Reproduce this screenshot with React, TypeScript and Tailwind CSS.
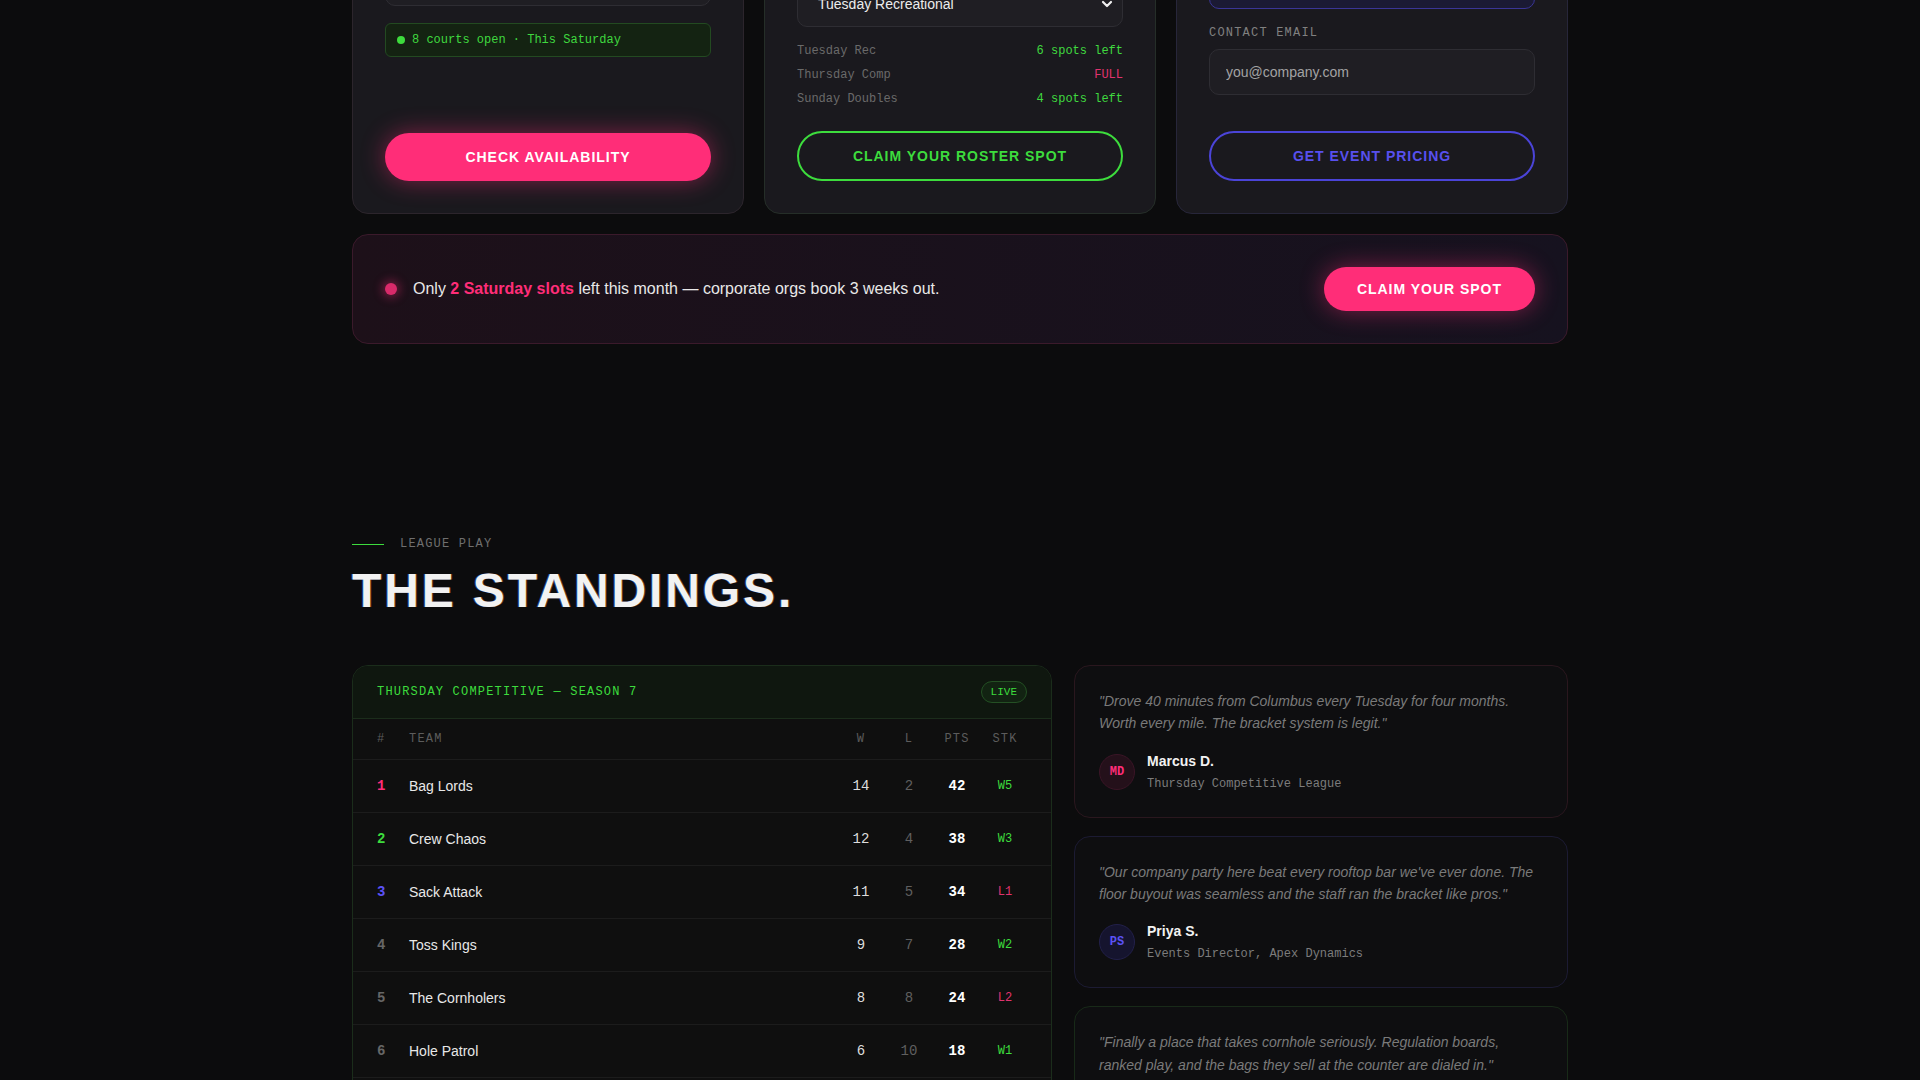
import React from "react";

const rows = [
  { rank: "1", rankColor: "text-[#ff2d78]", team: "Bag Lords", w: "14", l: "2", pts: "42", stk: "W5", win: true },
  { rank: "2", rankColor: "text-[#3ddc3d]", team: "Crew Chaos", w: "12", l: "4", pts: "38", stk: "W3", win: true },
  { rank: "3", rankColor: "text-[#5b52f5]", team: "Sack Attack", w: "11", l: "5", pts: "34", stk: "L1", win: false },
  { rank: "4", rankColor: "text-[#666666]", team: "Toss Kings", w: "9", l: "7", pts: "28", stk: "W2", win: true },
  { rank: "5", rankColor: "text-[#666666]", team: "The Cornholers", w: "8", l: "8", pts: "24", stk: "L2", win: false },
  { rank: "6", rankColor: "text-[#666666]", team: "Hole Patrol", w: "6", l: "10", pts: "18", stk: "W1", win: true },
  { rank: "7", rankColor: "text-[#666666]", team: "Board Certified", w: "5", l: "11", pts: "15", stk: "L3", win: false },
  { rank: "8", rankColor: "text-[#666666]", team: "Corn Stars", w: "3", l: "13", pts: "9", stk: "L4", win: false },
];

function LeftCard() {
  return (
    <div className="flex flex-col rounded-2xl border border-[#2c252c] bg-[#1a191e] p-8">
      <h3 className="text-xl font-bold leading-7 text-white">Book a Court</h3>
      <div className="mt-[25px] font-['Liberation_Mono',monospace] text-xs leading-4 tracking-[0.1em] text-[#808080]">
        DATE
      </div>
      <div className="mt-2 h-[46px] rounded-[10px] border border-[#2e2d33] bg-[#1f1e23]" />
      <div className="mt-[17px] flex h-[34px] items-center gap-[7px] rounded-md border border-[#234a21] bg-[#142312] px-[11px] font-['Liberation_Mono',monospace] text-xs text-[#3fd83f]">
        <span className="h-2 w-2 rounded-full bg-[#3ddc3d]" />
        <span>8 courts open · This Saturday</span>
      </div>
      <button className="mt-auto h-12 w-full rounded-full bg-[#ff2d78] text-sm font-bold uppercase tracking-[0.07em] text-white shadow-[0_0_24px_rgba(255,45,120,0.45)]">
        Check Availability
      </button>
    </div>
  );
}

function MiddleCard() {
  return (
    <div className="flex flex-col rounded-2xl border border-[#252e28] bg-[#1a191e] p-8">
      <h3 className="text-xl font-bold leading-7 text-white">Join a League</h3>
      <div className="mt-[46px] font-['Liberation_Mono',monospace] text-xs leading-4 tracking-[0.1em] text-[#808080]">
        LEAGUE NIGHT
      </div>
      <div className="mt-2 flex h-[46px] items-center rounded-[10px] border border-[#2e2d33] bg-[#1f1e23] pl-5 pr-[9px] text-sm text-[#ececec]">
        <span>Tuesday Recreational</span>
        <svg className="ml-auto" width="12" height="12" viewBox="0 0 12 12" fill="none">
          <path d="M2 4l4 4 4-4" stroke="#f0f0f0" strokeWidth="2.2" strokeLinecap="round" strokeLinejoin="round" />
        </svg>
      </div>
      <div className="mb-[20px] mt-[12px] font-['Liberation_Mono',monospace] text-xs">
        <div className="flex h-6 items-center justify-between">
          <span className="text-[#6a6a6a]">Tuesday Rec</span>
          <span className="text-[#3fd83f]">6 spots left</span>
        </div>
        <div className="flex h-6 items-center justify-between">
          <span className="text-[#6a6a6a]">Thursday Comp</span>
          <span className="text-[#e0336e]">FULL</span>
        </div>
        <div className="flex h-6 items-center justify-between">
          <span className="text-[#6a6a6a]">Sunday Doubles</span>
          <span className="text-[#3fd83f]">4 spots left</span>
        </div>
      </div>
      <button className="mt-auto h-[50px] w-full rounded-full border-2 border-[#3ddc3d] text-sm font-bold uppercase tracking-[0.07em] text-[#3ddc3d]">
        Claim Your Roster Spot
      </button>
    </div>
  );
}

function RightCard() {
  return (
    <div className="flex flex-col rounded-2xl border border-[#27263a] bg-[#1a191e] p-8">
      <h3 className="text-xl font-bold leading-7 text-white">Corporate Events</h3>
      <div className="mt-[28px] font-['Liberation_Mono',monospace] text-xs leading-4 tracking-[0.1em] text-[#808080]">
        COMPANY
      </div>
      <div className="mt-2 h-[46px] rounded-[10px] border border-[#3a3596] bg-[#1b1a34]" />
      <div className="mt-[16px] font-['Liberation_Mono',monospace] text-xs leading-4 tracking-[0.1em] text-[#808080]">
        CONTACT EMAIL
      </div>
      <input
        className="mt-[8px] h-[46px] w-full rounded-[10px] border border-[#2e2d33] bg-[#1f1e23] px-4 font-['Liberation_Sans',Arial,sans-serif] text-sm text-white outline-none placeholder:text-[#a3a3a3]"
        placeholder="you@company.com"
      />
      <button className="mt-auto h-[50px] w-full rounded-full border-2 border-[#4b44d8] text-sm font-bold uppercase tracking-[0.07em] text-[#5850ee]">
        Get Event Pricing
      </button>
    </div>
  );
}

function Banner() {
  return (
    <div className="mt-5 flex items-center justify-between rounded-2xl border border-[#3b1a2b] bg-[linear-gradient(90deg,#1d1019,#16121f)] px-8 py-8">
      <div className="flex items-center gap-4">
        <span className="h-3 w-3 rounded-full bg-[#d92a6a] shadow-[0_0_10px_3px_rgba(255,45,120,0.35)]" />
        <p className="text-base text-[#e8e8e8]">
          Only <span className="font-bold text-[#ff2d78]">2 Saturday slots</span> left this month — corporate orgs book 3
          weeks out.
        </p>
      </div>
      <button className="h-11 rounded-full bg-[#ff2d78] px-[33px] text-sm font-bold uppercase tracking-[0.07em] text-white shadow-[0_0_24px_rgba(255,45,120,0.45)]">
        Claim Your Spot
      </button>
    </div>
  );
}

function Standings() {
  return (
    <div className="overflow-hidden rounded-2xl border border-[#1b2d1b] bg-[#0f0f0f]">
      <div className="flex items-center justify-between border-b border-[#1b2d1b] bg-[#0f170f] px-6 py-[15px]">
        <span className="font-['Liberation_Mono',monospace] text-xs tracking-[0.1em] text-[#3ddc3d]">
          THURSDAY COMPETITIVE — SEASON 7
        </span>
        <span className="flex h-[22px] items-center rounded-full border border-[#245024] bg-[#122312] px-[9px] font-['Liberation_Mono',monospace] text-[11px] text-[#3ddc3d]">
          LIVE
        </span>
      </div>
      <div className="flex items-center border-b border-[#1c1c1c] py-3 pl-6 pr-[22px] font-['Liberation_Mono',monospace] text-xs leading-4 tracking-[0.1em] text-[#5c5c5c]">
        <span className="w-8">#</span>
        <span className="flex-1">TEAM</span>
        <span className="w-12 text-center">W</span>
        <span className="w-12 text-center">L</span>
        <span className="w-12 text-center">PTS</span>
        <span className="w-12 text-center">STK</span>
      </div>
      {rows.map((r) => (
        <div key={r.rank} className="flex items-center border-b border-[#1c1c1c] py-4 pl-6 pr-[22px] text-sm leading-5">
          <span className={`w-8 font-['Liberation_Mono',monospace] font-bold ${r.rankColor}`}>{r.rank}</span>
          <span className="flex-1 text-[#e8e8e8]">{r.team}</span>
          <span className="w-12 text-center font-['Liberation_Mono',monospace] text-[#dddddd]">{r.w}</span>
          <span className="w-12 text-center font-['Liberation_Mono',monospace] text-[#5f5f5f]">{r.l}</span>
          <span className="w-12 text-center font-['Liberation_Mono',monospace] font-bold text-white">{r.pts}</span>
          <span
            className={`w-12 text-center font-['Liberation_Mono',monospace] text-xs ${
              r.win ? "text-[#3ddc3d]" : "text-[#e0336e]"
            }`}
          >
            {r.stk}
          </span>
        </div>
      ))}
    </div>
  );
}

function Testimonial(props: {
  quote: string;
  name: string;
  role: string;
  initials: string;
  cardBorder: string;
  avatar: string;
}) {
  return (
    <div className={`rounded-2xl border bg-[#0e0e10] p-6 ${props.cardBorder}`}>
      <p className="text-sm italic leading-[1.6] text-[#7a7a7a]">{props.quote}</p>
      <div className="mt-4 flex items-center gap-3">
        <div
          className={`flex h-9 w-9 items-center justify-center rounded-full border font-['Liberation_Mono',monospace] text-xs font-bold ${props.avatar}`}
        >
          {props.initials}
        </div>
        <div>
          <div className="text-sm font-bold leading-5 text-[#f2f2f2]">{props.name}</div>
          <div className="mt-1 font-['Liberation_Mono',monospace] text-xs leading-[18px] text-[#7c7c7c]">{props.role}</div>
        </div>
      </div>
    </div>
  );
}

export default function App() {
  return (
    <div className="min-h-screen overflow-hidden bg-[#0c0c0d] font-['Liberation_Sans',Arial,sans-serif] text-[#e8e8e8]">
      <div className="mx-auto max-w-[1280px] px-8">
        <section className="-mt-[150px] pb-24">
          <div className="grid grid-cols-3 gap-5">
            <LeftCard />
            <MiddleCard />
            <RightCard />
          </div>
          <Banner />
        </section>

        <section className="pt-24">
          <div className="flex items-center gap-4">
            <span className="h-px w-8 bg-[#3ddc3d]" />
            <span className="font-['Liberation_Mono',monospace] text-xs leading-4 tracking-[0.1em] text-[#6f6f6f]">
              LEAGUE PLAY
            </span>
          </div>
          <h2 className="mt-[13px] text-5xl font-bold leading-[1.1] tracking-[0.06em] text-[#f2f2f2] [text-shadow:-1px_0_rgba(60,130,255,0.5),1px_0_rgba(255,140,40,0.4)]">
            THE STANDINGS.
          </h2>
          <div className="mt-[47px] grid grid-cols-[700px_1fr] items-start gap-[22px]">
            <Standings />
            <div className="flex flex-col gap-[18px]">
              <Testimonial
                quote={'"Drove 40 minutes from Columbus every Tuesday for four months. Worth every mile. The bracket system is legit."'}
                name="Marcus D."
                role="Thursday Competitive League"
                initials="MD"
                cardBorder="border-[#2a171e]"
                avatar="border-[#3a1526] bg-[#24101a] text-[#ff2d78]"
              />
              <Testimonial
                quote={'"Our company party here beat every rooftop bar we\'ve ever done. The floor buyout was seamless and the staff ran the bracket like pros."'}
                name="Priya S."
                role="Events Director, Apex Dynamics"
                initials="PS"
                cardBorder="border-[#1c1b33]"
                avatar="border-[#22204a] bg-[#15142e] text-[#5b52f5]"
              />
              <Testimonial
                quote={'"Finally a place that takes cornhole seriously. Regulation boards, ranked play, and the bags they sell at the counter are dialed in."'}
                name="Jake R."
                role="Tuesday Recreational League"
                initials="JR"
                cardBorder="border-[#182a18]"
                avatar="border-[#1f3f1f] bg-[#102010] text-[#3ddc3d]"
              />
            </div>
          </div>
        </section>
      </div>
    </div>
  );
}
